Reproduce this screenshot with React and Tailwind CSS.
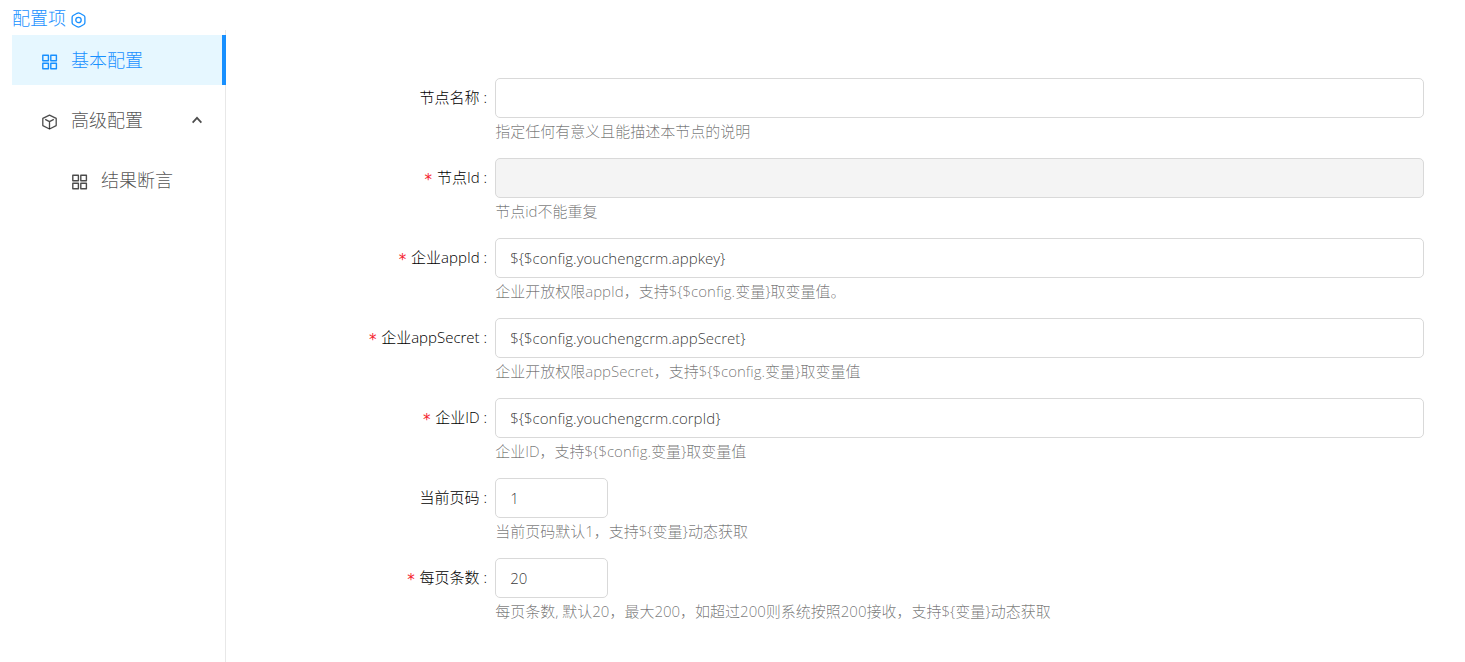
import React from "react";

const fields = [
  { id: "nodeName", label: "节点名称", value: "", hint: "指定任何有意义且能描述本节点的说明" },
  { id: "nodeId", label: "节点Id", required: true, disabled: true, value: "", hint: "节点id不能重复" },
  { id: "appId", label: "企业appId", required: true, value: "${$config.youchengcrm.appkey}", hint: "企业开放权限appId，支持${$config.变量}取变量值。" },
  { id: "appSecret", label: "企业appSecret", required: true, value: "${$config.youchengcrm.appSecret}", hint: "企业开放权限appSecret，支持${$config.变量}取变量值" },
  { id: "corpId", label: "企业ID", required: true, value: "${$config.youchengcrm.corpId}", hint: "企业ID，支持${$config.变量}取变量值" },
  { id: "pageNo", label: "当前页码", short: true, value: "1", hint: "当前页码默认1，支持${变量}动态获取" },
  { id: "pageSize", label: "每页条数", required: true, short: true, value: "20", hint: "每页条数, 默认20，最大200，如超过200则系统按照200接收，支持${变量}动态获取" },
];

const SettingIcon = () => (
  <svg width="16" height="16" viewBox="0 0 16 16" fill="none" stroke="currentColor" strokeWidth="1.3" strokeLinejoin="round" className="mt-1">
    <path d="M6.1 1.3 Q7.5 0.6 8.9 1.3 L12.8 3.5 Q13.9 4.2 13.9 5.4 V10.6 Q13.9 11.8 12.8 12.5 L8.9 14.7 Q7.5 15.4 6.1 14.7 L2.2 12.5 Q1.1 11.8 1.1 10.6 V5.4 Q1.1 4.2 2.2 3.5 Z" />
    <circle cx="7.5" cy="8" r="2.7" />
  </svg>
);

const GridIcon = () => (
  <svg width="16" height="16" viewBox="0 0 16 16" fill="none" stroke="currentColor" strokeWidth="1.4" strokeLinejoin="round" className="mt-1">
    <rect x="0.8" y="1.2" width="5.6" height="5.6" />
    <rect x="8.8" y="1.2" width="5.6" height="5.6" />
    <rect x="0.8" y="9.2" width="5.6" height="5.6" />
    <rect x="8.8" y="9.2" width="5.6" height="5.6" />
  </svg>
);

const BoxIcon = () => (
  <svg width="16" height="16" viewBox="0 0 16 16" fill="none" stroke="currentColor" strokeWidth="1.3" strokeLinejoin="round" className="mt-1">
    <path d="M7.5 1.1 L14.2 4.4 V11.6 L7.5 15 L0.8 11.6 V4.4 Z" />
    <path d="M3.2 5.4 L7.5 7.6 L11.8 5.4 M7.5 7.6 V15" />
  </svg>
);

const ArrowUpIcon = () => (
  <svg width="10" height="8" viewBox="0 0 10 8" fill="none" stroke="currentColor" strokeWidth="1.8">
    <path d="M0.6 6.6 L5 1.8 L9.4 6.6" />
  </svg>
);

const Field = ({ field }) => (
  <div className="grid grid-cols-[20%_80%] h-20">
    <label htmlFor={field.id} className="pr-2 h-10 leading-[38px] text-right text-black whitespace-nowrap">
      {field.required && <span className="mr-1 font-['DejaVu_Sans_Mono',monospace] font-normal align-[-2px] leading-none text-[#f5222d]">*</span>}
      {field.label}
      <span className="ml-1">:</span>
    </label>
    <div>
      <input
        id={field.id}
        type="text"
        defaultValue={field.value}
        disabled={field.disabled}
        required={field.required}
        className={`block h-10 px-3.5 rounded-[5px] border border-[#d9d9d9] text-black/80 outline-none focus:border-[#1890ff] disabled:bg-[#f4f4f4] ${field.short ? "w-[113px]" : "w-full"}`}
      />
      <p className="leading-[26px] text-black/55">{field.hint}</p>
    </div>
  </div>
);

export default function App() {
  return (
    <div className="min-h-screen flex flex-col bg-white pl-3 font-light text-[15px] font-['Open_Sans','Noto_Sans_CJK_SC',sans-serif]">
      <h1 className="h-[30px] pt-1.5 flex items-center gap-[5px] text-lg font-light text-[#1890ff]">
        配置项
        <SettingIcon />
      </h1>
      <div className="flex flex-1">
        <nav className="w-[214px] shrink-0 pt-[5px] border-r border-[#e8e8e8] text-lg text-black/70">
          <a href="#basic" className="-mr-px h-[50px] pl-[30px] flex items-center gap-[13px] bg-[#e6f7ff] border-r-4 border-[#1890ff] text-[#1890ff]">
            <GridIcon />
            基本配置
          </a>
          <button type="button" aria-expanded="true" className="mt-2.5 w-full h-[50px] pl-[30px] pr-[23px] flex items-center gap-[13px]">
            <BoxIcon />
            高级配置
            <span className="ml-auto">
              <ArrowUpIcon />
            </span>
          </button>
          <a href="#assert" className="mt-2.5 h-[50px] pl-[60px] flex items-center gap-[13px]">
            <GridIcon />
            结果断言
          </a>
        </nav>
        <form className="flex-1 min-w-0 pt-12 pl-[37px] pr-[41px]">
          {fields.map((field) => (
            <Field key={field.id} field={field} />
          ))}
        </form>
      </div>
    </div>
  );
}
